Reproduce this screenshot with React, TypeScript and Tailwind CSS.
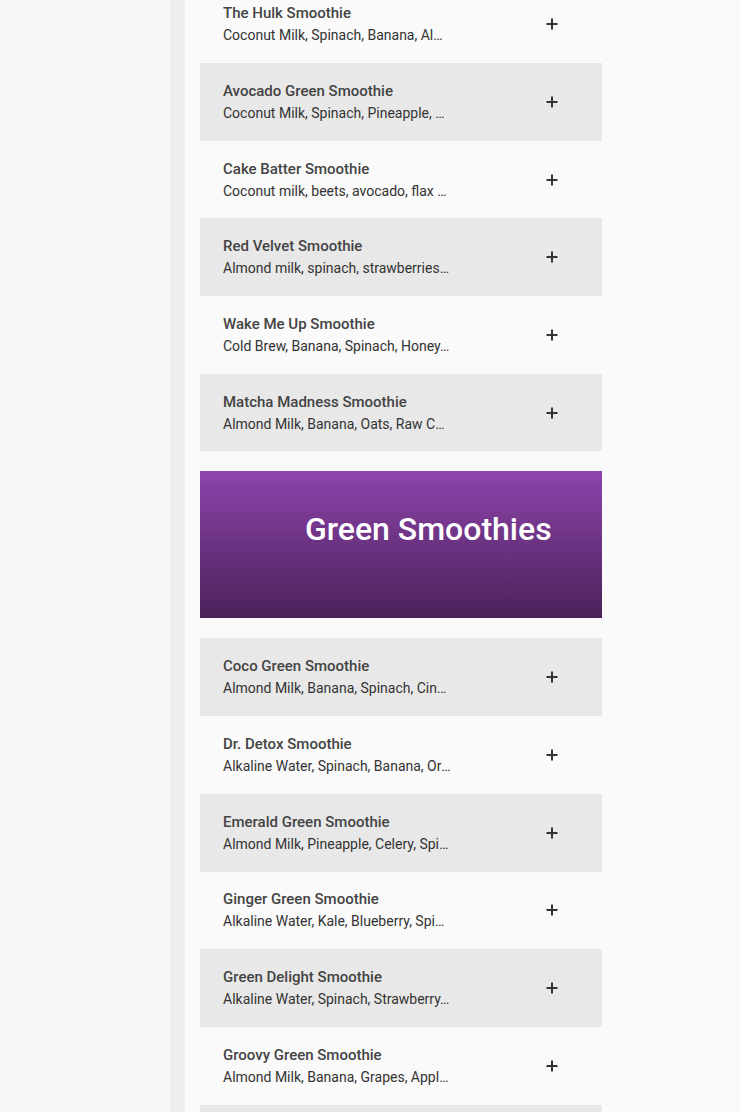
const smoothiesTop = [
  { name: "The Hulk Smoothie", ingredients: "Coconut Milk, Spinach, Banana, Almond Butter, Dates" },
  { name: "Avocado Green Smoothie", ingredients: "Coconut Milk, Spinach, Pineapple, Avocado" },
  { name: "Cake Batter Smoothie", ingredients: "Coconut milk, beets, avocado, flax seeds" },
  { name: "Red Velvet Smoothie", ingredients: "Almond milk, spinach, strawberries, cacao" },
  { name: "Wake Me Up Smoothie", ingredients: "Cold Brew, Banana, Spinach, Honey, Oats" },
  { name: "Matcha Madness Smoothie", ingredients: "Almond Milk, Banana, Oats, Raw Cacao, Matcha" },
];

const greenSmoothies = [
  { name: "Coco Green Smoothie", ingredients: "Almond Milk, Banana, Spinach, Cinnamon" },
  { name: "Dr. Detox Smoothie", ingredients: "Alkaline Water, Spinach, Banana, Orange" },
  { name: "Emerald Green Smoothie", ingredients: "Almond Milk, Pineapple, Celery, Spinach" },
  { name: "Ginger Green Smoothie", ingredients: "Alkaline Water, Kale, Blueberry, Spinach" },
  { name: "Green Delight Smoothie", ingredients: "Alkaline Water, Spinach, Strawberry, Banana" },
  { name: "Groovy Green Smoothie", ingredients: "Almond Milk, Banana, Grapes, Apple, Kale" },
  { name: "Kale Kiwi Smoothie", ingredients: "Almond Milk, Kale, Kiwi, Banana" },
];

const PlusIcon = () => (
  <svg width="12" height="12" viewBox="0 0 12 12" className="text-[#333]">
    <path d="M6 0.5v11M0.5 6h11" stroke="currentColor" strokeWidth="2" fill="none" />
  </svg>
);

const Row = ({ name, ingredients, shaded }: { name: string; ingredients: string; shaded: boolean }) => (
  <div className={`flex h-[77.7px] items-center justify-between pl-[23px] pr-[44px] ${shaded ? "bg-[#e8e8e8]" : ""}`}>
    <div className="flex flex-col">
      <span className="text-[15px] leading-[22px] font-medium text-[#444]">{name}</span>
      <span className="w-[228px] truncate text-[14px] leading-[22px] text-[#333]">{ingredients}</span>
    </div>
    <PlusIcon />
  </div>
);

export default function App() {
  return (
    <div className="flex h-[1112px] overflow-hidden bg-[#fafafa] font-['Roboto','Liberation_Sans',sans-serif]">
      <div className="w-[170px] shrink-0 bg-[#f8f8f8]" />
      <div className="w-[15px] shrink-0 bg-[#efefef]" />
      <div className="pl-[15px]">
        <div className="-mt-[14.7px] flex w-[402px] flex-col">
          {smoothiesTop.map((s, i) => (
            <Row key={s.name} name={s.name} ingredients={s.ingredients} shaded={i % 2 === 1} />
          ))}
          <div className="my-[20px] h-[147px] bg-gradient-to-b from-[#8e44ad] to-[#4b2259] pl-[105px] pt-[39px]">
            <h2 className="text-[32px] leading-[38px] font-medium text-white">Green Smoothies</h2>
          </div>
          {greenSmoothies.map((s, i) => (
            <Row key={s.name} name={s.name} ingredients={s.ingredients} shaded={i % 2 === 0} />
          ))}
        </div>
      </div>
    </div>
  );
}
